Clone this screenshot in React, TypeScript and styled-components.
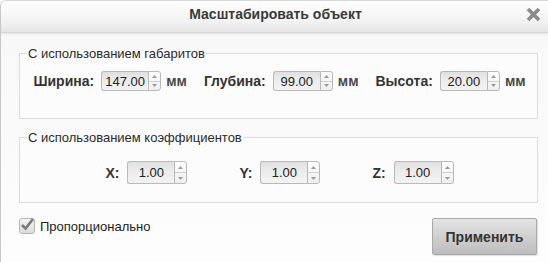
import React from 'react';
import styled, { createGlobalStyle } from 'styled-components';

const GlobalStyle = createGlobalStyle`
  html, body {
    margin: 0;
    padding: 0;
    background: #ffffff;
  }
  body {
    font-family: "Liberation Sans", Arial, sans-serif;
  }
`

const Dialog = styled.div`
  width: 548px;
  height: 262px;
  box-sizing: border-box;
  border-left: 1px solid #c8c8c8;
  border-top: 1px solid #d8d8d8;
  border-top-left-radius: 6px;
  overflow: hidden;
  display: flex;
  flex-direction: column;
  background: linear-gradient(to bottom, #eeeeee 0px, #f8f8f8 40px, #fdfdfd 100%);
`

const Header = styled.div`
  position: relative;
  height: 31px;
  flex: none;
  display: flex;
  align-items: center;
  justify-content: center;
  background: linear-gradient(to bottom, #ffffff 0%, #f4f4f4 60%, #e6e6e6 100%);
  border-bottom: 1px solid #d6d6d6;
  box-shadow: 0 1px 2px rgba(0, 0, 0, 0.08);
`

const Title = styled.div`
  font-size: 14px;
  font-weight: bold;
  color: #3a3a3a;
  margin-top: -5px;
  margin-left: 2px;
`

const Close = styled.div`
  position: absolute;
  right: 6px;
  top: 5px;
  width: 17px;
  height: 17px;
`

const Body = styled.div`
  padding: 13px 10px 0 18px;
  display: flex;
  flex-direction: column;
`

const Fieldset = styled.fieldset<{ $height: number }>`
  margin: 0;
  padding: 0;
  height: ${p => p.$height}px;
  box-sizing: border-box;
  border: 1px solid #dcdcdc;
  background: #fcfcfc;
  min-inline-size: 0;
  & + & {
    margin-top: 11px;
  }
`

const Legend = styled.legend`
  font-size: 13px;
  color: #2a2a2a;
  padding: 0 1px;
  margin-left: 7px;
`

const Row = styled.div<{ $gap: number; $top: number }>`
  display: flex;
  justify-content: center;
  align-items: center;
  gap: ${p => p.$gap}px;
  margin-top: ${p => p.$top}px;
  padding-left: 2px;
`

const Group = styled.div`
  display: flex;
  align-items: center;
`

const Label = styled.span<{ $gap: number }>`
  font-size: 14px;
  font-weight: bold;
  color: #333;
  margin-right: ${p => p.$gap}px;
`

const Unit = styled.span`
  font-size: 14px;
  font-weight: bold;
  color: #4a4a4a;
  margin-left: 5px;
`

const Spinner = styled.div<{ $height: number }>`
  display: flex;
  height: ${p => p.$height}px;
`

const Field = styled.div<{ $width: number }>`
  width: ${p => p.$width}px;
  box-sizing: border-box;
  border: 1px solid #b9b9b9;
  border-right: none;
  border-radius: 3px 0 0 3px;
  background: linear-gradient(to bottom, #e0e0e0 0%, #ebebeb 40%, #f3f3f3 100%);
  display: flex;
  align-items: center;
  justify-content: center;
  font-size: 13px;
  color: #222;
`

const Arrows = styled.div`
  width: 13px;
  box-sizing: border-box;
  border: 1px solid #b9b9b9;
  border-radius: 0 3px 3px 0;
  background: linear-gradient(to bottom, #fdfdfd, #efefef);
  display: flex;
  flex-direction: column;
`

const ArrowCell = styled.div<{ $down?: boolean }>`
  flex: 1;
  display: flex;
  align-items: center;
  justify-content: center;
  border-top: ${p => (p.$down ? '1px solid #cfcfcf' : 'none')};
`

const Footer = styled.div`
  display: flex;
  justify-content: space-between;
  align-items: flex-start;
  margin-top: 15px;
  padding-right: 1px;
`

const Check = styled.label`
  display: flex;
  align-items: center;
  gap: 5px;
  margin-top: 0;
  font-size: 13px;
  color: #222;
`

const Box = styled.span`
  width: 16px;
  height: 16px;
  box-sizing: border-box;
  border: 1px solid #b5b5b5;
  border-radius: 3px;
  background: linear-gradient(to bottom, #f4f4f4, #dcdcdc);
  position: relative;
`

const Apply = styled.button`
  width: 105px;
  height: 37px;
  border: 1px solid #a9a9a9;
  border-radius: 2px;
  background: linear-gradient(to bottom, #e4e4e4 0%, #d0d0d0 50%, #bdbdbd 100%);
  font-family: "Liberation Sans", Arial, sans-serif;
  font-size: 14px;
  font-weight: bold;
  color: #333;
  padding: 0;
  box-shadow: 1px 1px 1px rgba(0, 0, 0, 0.12);
`

const Tri = ({ up }: { up?: boolean }) => (
  <svg width="5" height="3" viewBox="0 0 5 3">
    <path d={up ? 'M0 3 L2.5 0 L5 3 Z' : 'M0 0 L2.5 3 L5 0 Z'} fill="#9a9a9a" />
  </svg>
)

const NumberBox = ({ value, width, height }: { value: string; width: number; height: number }) => (
  <Spinner $height={height}>
    <Field $width={width}>{value}</Field>
    <Arrows>
      <ArrowCell><Tri up /></ArrowCell>
      <ArrowCell $down><Tri /></ArrowCell>
    </Arrows>
  </Spinner>
)

const dims = [
  { label: 'Ширина:', value: '147.00' },
  { label: 'Глубина:', value: '99.00' },
  { label: 'Высота:', value: '20.00' },
]

const coeffs = ['X:', 'Y:', 'Z:']

export default function App() {
  return (
    <>
      <GlobalStyle />
      <Dialog>
        <Header>
          <Title>Масштабировать объект</Title>
          <Close>
            <svg width="17" height="17" viewBox="0 0 17 17">
              <path d="M3 3 L14 14 M14 3 L3 14" stroke="#8c8c8c" strokeWidth="3.8" strokeLinecap="butt" />
            </svg>
          </Close>
        </Header>
        <Body>
          <Fieldset $height={73}>
            <Legend>С использованием габаритов</Legend>
            <Row $gap={17} $top={10}>
              {dims.map(d => (
                <Group key={d.label}>
                  <Label $gap={7}>{d.label}</Label>
                  <NumberBox value={d.value} width={47} height={20} />
                  <Unit>мм</Unit>
                </Group>
              ))}
            </Row>
          </Fieldset>
          <Fieldset $height={73}>
            <Legend>С использованием коэффициентов</Legend>
            <Row $gap={52} $top={16}>
              {coeffs.map(c => (
                <Group key={c}>
                  <Label $gap={8}>{c}</Label>
                  <NumberBox value="1.00" width={47} height={23} />
                </Group>
              ))}
            </Row>
          </Fieldset>
          <Footer>
            <Check>
              <Box>
                <svg width="16" height="16" viewBox="0 0 16 16" style={{ position: 'absolute', left: -1, top: -3 }}>
                  <path d="M3 9 L6.5 12.5 L14 3" stroke="#7a7a7a" strokeWidth="2.6" fill="none" />
                </svg>
              </Box>
              Пропорционально
            </Check>
            <Apply>Применить</Apply>
          </Footer>
        </Body>
      </Dialog>
    </>
  )
}
